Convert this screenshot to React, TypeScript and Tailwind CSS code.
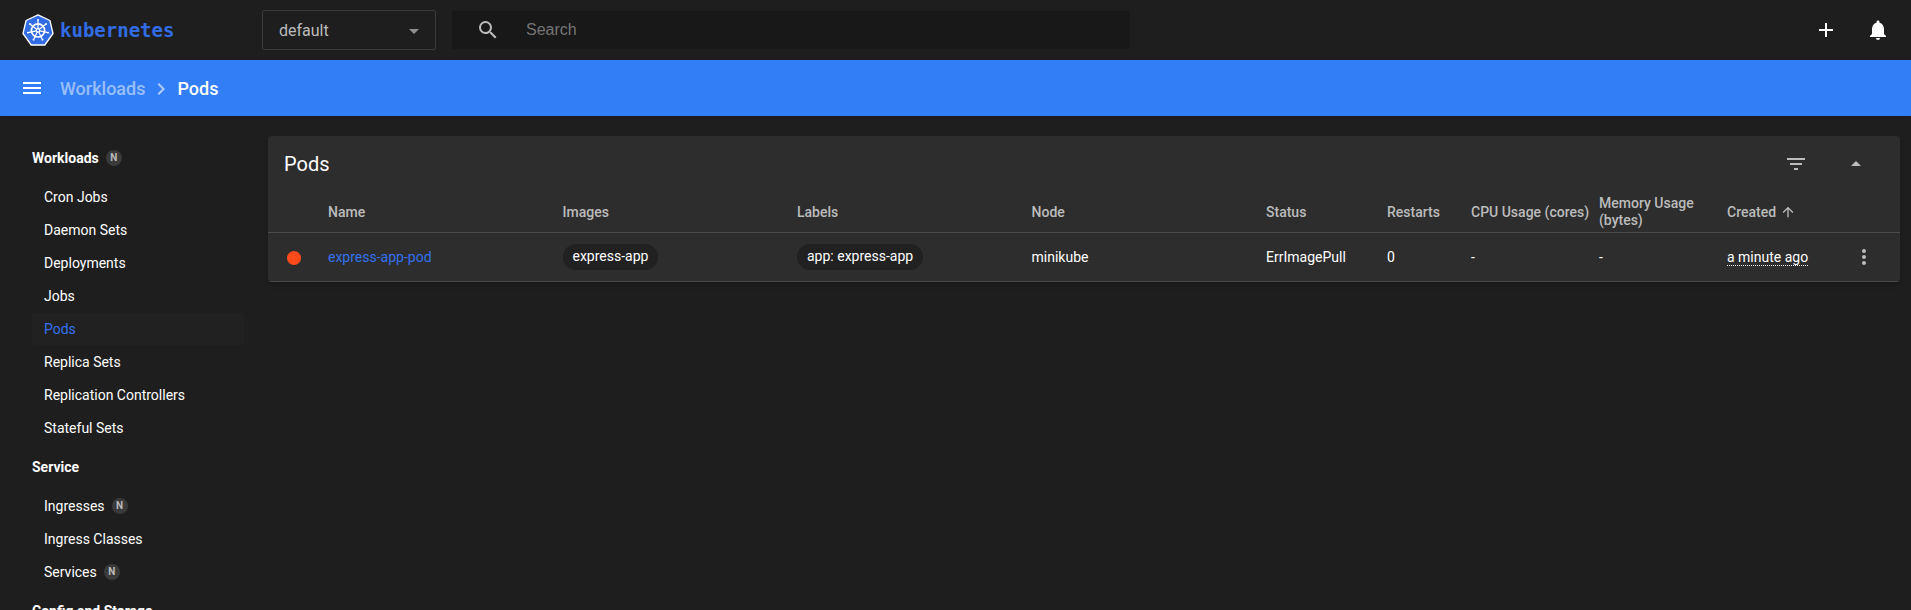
import type { ReactNode } from 'react';
import {
  MdAdd,
  MdArrowDropDown,
  MdArrowDropUp,
  MdArrowUpward,
  MdChevronRight,
  MdFilterList,
  MdMenu,
  MdMoreVert,
  MdNotifications,
  MdSearch,
} from 'react-icons/md';

type NavItem = { label: string; namespaced?: boolean };
type NavGroup = NavItem & { items: NavItem[] };

const NAV: NavGroup[] = [
  {
    label: 'Workloads',
    namespaced: true,
    items: [
      { label: 'Cron Jobs' },
      { label: 'Daemon Sets' },
      { label: 'Deployments' },
      { label: 'Jobs' },
      { label: 'Pods' },
      { label: 'Replica Sets' },
      { label: 'Replication Controllers' },
      { label: 'Stateful Sets' },
    ],
  },
  {
    label: 'Service',
    items: [
      { label: 'Ingresses', namespaced: true },
      { label: 'Ingress Classes' },
      { label: 'Services', namespaced: true },
    ],
  },
  { label: 'Config and Storage', items: [] },
];

const SPOKES = [0, 1, 2, 3, 4, 5, 6].map((i) => (i * 360) / 7);

function Logo() {
  return (
    <svg viewBox="0 0 32 32" className="size-8" aria-hidden="true">
      <path
        d="M16 .9 27.9 6.5 31 19.5 22.8 31H9.2L1 19.5 4.1 6.5Z"
        fill="#326ce5"
        stroke="#fff"
        strokeWidth="1.3"
        strokeLinejoin="round"
      />
      <g stroke="#fff" fill="none" strokeLinecap="round">
        <circle cx="16" cy="16.4" r="6.6" strokeWidth="1.7" />
        {SPOKES.map((a) => (
          <path key={a} d="M16 14.6V6.1" strokeWidth="1.2" transform={`rotate(${a} 16 16.4)`} />
        ))}
        {SPOKES.map((a) => (
          <path key={a} d="M15.5 5.9H16.5" strokeWidth="1.1" transform={`rotate(${a} 16 16.4)`} />
        ))}
        <circle cx="16" cy="16.4" r="1.7" strokeWidth="1.2" />
      </g>
    </svg>
  );
}

function Badge() {
  return (
    <span className="flex size-4 items-center justify-center rounded-full bg-[#3a3a3a] text-[10px] font-bold text-[#bcbcbc]">
      N
    </span>
  );
}

function Chip({ children }: { children: ReactNode }) {
  return (
    <span className="inline-flex h-[26px] items-center rounded-full bg-[#212121] px-[10px] pb-px">{children}</span>
  );
}

function Header() {
  return (
    <header className="flex h-[60px] shrink-0 items-center bg-[#1e1e1e] pr-[21px] pl-[22px]">
      <a
        href="#"
        className="flex w-60 shrink-0 items-center gap-[6px] font-['DejaVu_Sans_Mono',monospace] text-[19px] font-bold text-[#326ce5]"
      >
        <Logo />
        <span className="pt-0.5">kubernetes</span>
      </a>
      <div className="grid w-[174px] shrink-0 items-center">
        <select
          aria-label="Namespace"
          className="col-start-1 row-start-1 h-10 appearance-none rounded-xs border border-[#3a3a3a] bg-transparent px-4 pt-0.5 text-base text-[#bcbcbc] outline-none"
        >
          <option>default</option>
        </select>
        <MdArrowDropDown className="pointer-events-none col-start-1 row-start-1 mt-0.5 mr-[10px] size-6 justify-self-end text-[#8e8e8e]" />
      </div>
      <label className="ml-4 flex h-[38px] w-full max-w-[678px] items-center gap-[26px] rounded-xs bg-[#181818] px-6">
        <MdSearch className="size-6 shrink-0 text-[#bcbcbc]" />
        <input
          type="text"
          aria-label="Search"
          placeholder="Search"
          className="min-w-0 flex-1 bg-transparent font-['Liberation_Sans',sans-serif] text-base outline-none placeholder:text-[#757575]"
        />
      </label>
      <div className="ml-auto flex gap-7">
        <button type="button" aria-label="Create new resource">
          <MdAdd className="size-6" />
        </button>
        <button type="button" aria-label="Notifications">
          <MdNotifications className="size-6" />
        </button>
      </div>
    </header>
  );
}

function Breadcrumbs() {
  return (
    <div className="z-10 flex h-14 shrink-0 items-center gap-4 bg-[#327ef6] px-5 text-lg font-medium shadow-sm">
      <button type="button" aria-label="Toggle navigation">
        <MdMenu className="size-6" />
      </button>
      <nav aria-label="Breadcrumb" className="flex items-center gap-1 pt-0.5">
        <a href="#" className="text-white/50">
          Workloads
        </a>
        <MdChevronRight className="size-6 text-white/60" />
        <span>Pods</span>
      </nav>
    </div>
  );
}

function Sidebar() {
  return (
    <nav aria-label="Resources" className="w-[268px] shrink-0 overflow-hidden pt-[26px] pr-6 pl-8">
      {NAV.map((group) => (
        <section key={group.label} className="mb-[7px]">
          <a href="#" className="mb-[7px] flex h-8 items-center gap-[7px] font-bold">
            {group.label}
            {group.namespaced && <Badge />}
          </a>
          <ul className="flex flex-col gap-px">
            {group.items.map((item) => (
              <li key={item.label}>
                <a
                  href="#"
                  className={
                    item.label === 'Pods'
                      ? 'flex h-8 items-center gap-[7px] rounded-xs bg-[#212121] px-3 text-[#3371f0]'
                      : 'flex h-8 items-center gap-[7px] px-3'
                  }
                >
                  {item.label}
                  {item.namespaced && <Badge />}
                </a>
              </li>
            ))}
          </ul>
        </section>
      ))}
    </nav>
  );
}

function PodsCard() {
  return (
    <section className="overflow-hidden rounded bg-[#2d2d2d] shadow-md">
      <div className="flex h-14 items-center justify-between pr-8 pl-4">
        <h1 className="text-xl">Pods</h1>
        <div className="flex gap-9 text-[#bcbcbc]">
          <button type="button" aria-label="Filter">
            <MdFilterList className="size-6" />
          </button>
          <button type="button" aria-label="Collapse">
            <MdArrowDropUp className="size-6" />
          </button>
        </div>
      </div>
      <table className="w-full table-fixed text-left">
        <colgroup>
          <col className="w-[60px]" />
          <col />
          <col />
          <col />
          <col />
          <col className="w-[121px]" />
          <col className="w-[84px]" />
          <col className="w-32" />
          <col className="w-32" />
          <col className="w-[121px]" />
          <col className="w-[52px]" />
        </colgroup>
        <thead>
          <tr className="h-10 border-b border-[#4a4a4a] leading-[17px] text-[#bcbcbc] [&>th]:pt-px [&>th]:font-medium">
            <th aria-label="State" />
            <th>Name</th>
            <th>Images</th>
            <th>Labels</th>
            <th>Node</th>
            <th>Status</th>
            <th>Restarts</th>
            <th className="whitespace-nowrap">CPU Usage (cores)</th>
            <th>Memory Usage (bytes)</th>
            <th>
              <button type="button" className="flex items-center gap-1 font-medium">
                Created
                <MdArrowUpward className="size-4" />
              </button>
            </th>
            <th aria-label="Actions" />
          </tr>
        </thead>
        <tbody>
          <tr className="h-[49px] border-b border-[#4a4a4a]">
            <td className="pt-0.5 pl-[19px]">
              <span className="block size-[14px] rounded-full bg-[#ff4a1c]" />
            </td>
            <td>
              <a href="#" className="text-[#3371f0]">
                express-app-pod
              </a>
            </td>
            <td>
              <Chip>express-app</Chip>
            </td>
            <td>
              <Chip>app: express-app</Chip>
            </td>
            <td>minikube</td>
            <td>ErrImagePull</td>
            <td>0</td>
            <td>-</td>
            <td>-</td>
            <td>
              <span className="border-b border-dotted border-white">a minute ago</span>
            </td>
            <td>
              <button type="button" aria-label="Pod actions" className="ml-1 block text-[#bcbcbc]">
                <MdMoreVert className="size-6" />
              </button>
            </td>
          </tr>
        </tbody>
      </table>
    </section>
  );
}

export default function App() {
  return (
    <div className="flex h-screen flex-col overflow-hidden bg-[#1e1e1e] font-[Roboto,sans-serif] text-sm text-white">
      <Header />
      <Breadcrumbs />
      <div className="flex min-h-0 flex-1">
        <Sidebar />
        <main className="min-w-0 flex-1 pt-5 pr-[11px]">
          <PodsCard />
        </main>
      </div>
    </div>
  );
}
